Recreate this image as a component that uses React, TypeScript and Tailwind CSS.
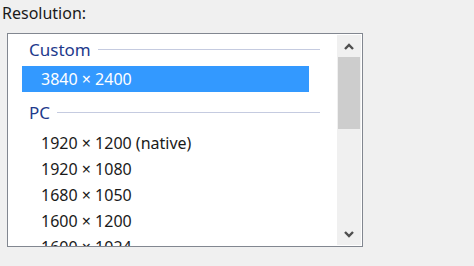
import React from 'react';

const pcModes = ['1920 × 1200 (native)', '1920 × 1080', '1680 × 1050', '1600 × 1200', '1600 × 1024'];

function GroupHeader({ label, className }: { label: string; className?: string }) {
  return (
    <div className={`flex items-center h-[26px] pl-[21px] pr-[17px] ${className ?? ''}`}>
      <span className="text-[17px] text-[#1e3a8c] leading-none">{label}</span>
      <div className="flex-1 h-px bg-[#c5cbe0] ml-[7px]" />
    </div>
  );
}

function Chevron({ up }: { up?: boolean }) {
  return (
    <svg width="10" height="7" viewBox="0 0 10 7" className={up ? '' : 'rotate-180'}>
      <path d="M1 6 L5 2 L9 6" fill="none" stroke="#4f4f4f" strokeWidth="2.4" />
    </svg>
  );
}

export default function App() {
  return (
    <div className="w-[474px] h-[266px] bg-[#f0f0f0] overflow-hidden" style={{ fontFamily: '"Noto Sans", "Open Sans", sans-serif' }}>
      <div className="pl-[2px] pt-[2px] h-[30px] text-[16px] text-[#1a1a1a] leading-[22px]">Resolution:</div>

      {/* list box */}
      <div className="ml-[7px] mt-[3px] w-[356px] h-[214px] border border-[#828790] bg-white flex">
        <div className="flex-1 overflow-hidden pt-[2px]">
          <GroupHeader label="Custom" />
          <div className="mt-[4px] ml-[14px] w-[287px] h-[26px] bg-[#3399ff] text-white text-[16px] flex items-center pl-[19px]">
            3840 × 2400
          </div>
          <GroupHeader label="PC" className="mt-[7px]" />
          <div className="mt-[5px]">
            {pcModes.map((m) => (
              <div key={m} className="h-[26px] flex items-center pl-[33px] text-[16px] text-[#1a1a1a]">{m}</div>
            ))}
          </div>
        </div>

        {/* scrollbar */}
        <div className="w-[24px] bg-[#f0f0f0] flex flex-col mr-[1px] my-px">
          <div className="h-[22px] flex items-center justify-center"><Chevron up /></div>
          <div className="mx-[1px] h-[72px] bg-[#cdcdcd]" />
          <div className="flex-1" />
          <div className="h-[22px] flex items-center justify-center"><Chevron /></div>
        </div>
      </div>
    </div>
  );
}
